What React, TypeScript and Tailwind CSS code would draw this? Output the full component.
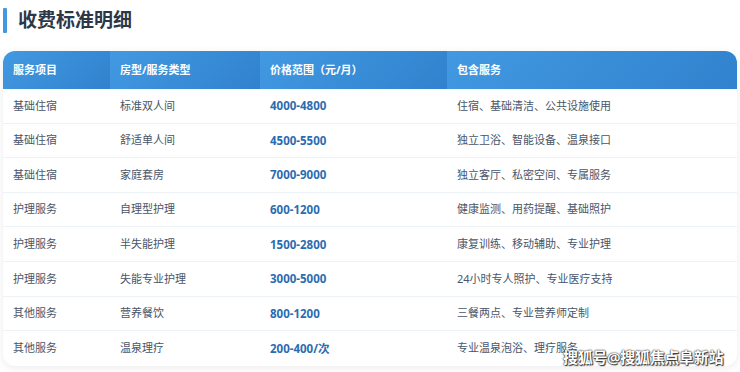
import React from 'react'

const rows = [
  ['基础住宿', '标准双人间', '4000-4800', '住宿、基础清洁、公共设施使用'],
  ['基础住宿', '舒适单人间', '4500-5500', '独立卫浴、智能设备、温泉接口'],
  ['基础住宿', '家庭套房', '7000-9000', '独立客厅、私密空间、专属服务'],
  ['护理服务', '自理型护理', '600-1200', '健康监测、用药提醒、基础照护'],
  ['护理服务', '半失能护理', '1500-2800', '康复训练、移动辅助、专业护理'],
  ['护理服务', '失能专业护理', '3000-5000', '24小时专人照护、专业医疗支持'],
  ['其他服务', '营养餐饮', '800-1200', '三餐两点、专业营养师定制'],
  ['其他服务', '温泉理疗', '200-400/次', '专业温泉泡浴、理疗服务'],
]

const heads = ['服务项目', '房型/服务类型', '价格范围（元/月）', '包含服务']

const App = () => {
  return (
    <main className="relative w-[740px] h-[372px] overflow-hidden bg-white font-['Noto_Sans','Noto_Sans_CJK_SC',sans-serif]">
      <div className="flex items-center gap-[11px] mt-[8px] ml-[3px] h-[25px]">
        <div className="w-[4px] h-full bg-[#4299e1] rounded-[1px]" />
        <h1 className="text-[19px] font-bold text-[#2d3748] leading-none">收费标准明细</h1>
      </div>

      <div className="mt-[18px] mx-[3px] rounded-[12px] bg-white shadow-[0_2px_8px_rgba(0,0,0,0.08)] overflow-hidden">
        <div className="grid grid-cols-[107px_150px_187px_1fr] h-[38px]">
          {heads.map((h) => (
            <div
              key={h}
              className="flex items-center pl-[10px] text-[11px] font-bold text-white bg-[linear-gradient(135deg,#4299e1,#3182ce)]"
            >
              {h}
            </div>
          ))}
        </div>
        {rows.map((r, i) => (
          <div
            key={i}
            className={`grid grid-cols-[107px_150px_187px_1fr] h-[34.6px] text-[11px] text-[#4a5568] ${
              i < rows.length - 1 ? 'border-b border-[#edf2f7]' : ''
            }`}
          >
            <div className="flex items-center pl-[10px]">{r[0]}</div>
            <div className="flex items-center pl-[10px]">{r[1]}</div>
            <div className="flex items-center pl-[10px] font-bold text-[#2b6cb0] text-[11.5px]">{r[2]}</div>
            <div className="flex items-center pl-[10px]">{r[3]}</div>
          </div>
        ))}
      </div>

      <div className="absolute left-[563px] top-[346px] text-[15px] font-semibold text-white tracking-[-0.3px] [text-shadow:0_0_1px_#333,0_0_2px_#333,1px_1px_1px_#333]">
        搜狐号@搜狐焦点阜新站
      </div>
    </main>
  )
}

export default App
